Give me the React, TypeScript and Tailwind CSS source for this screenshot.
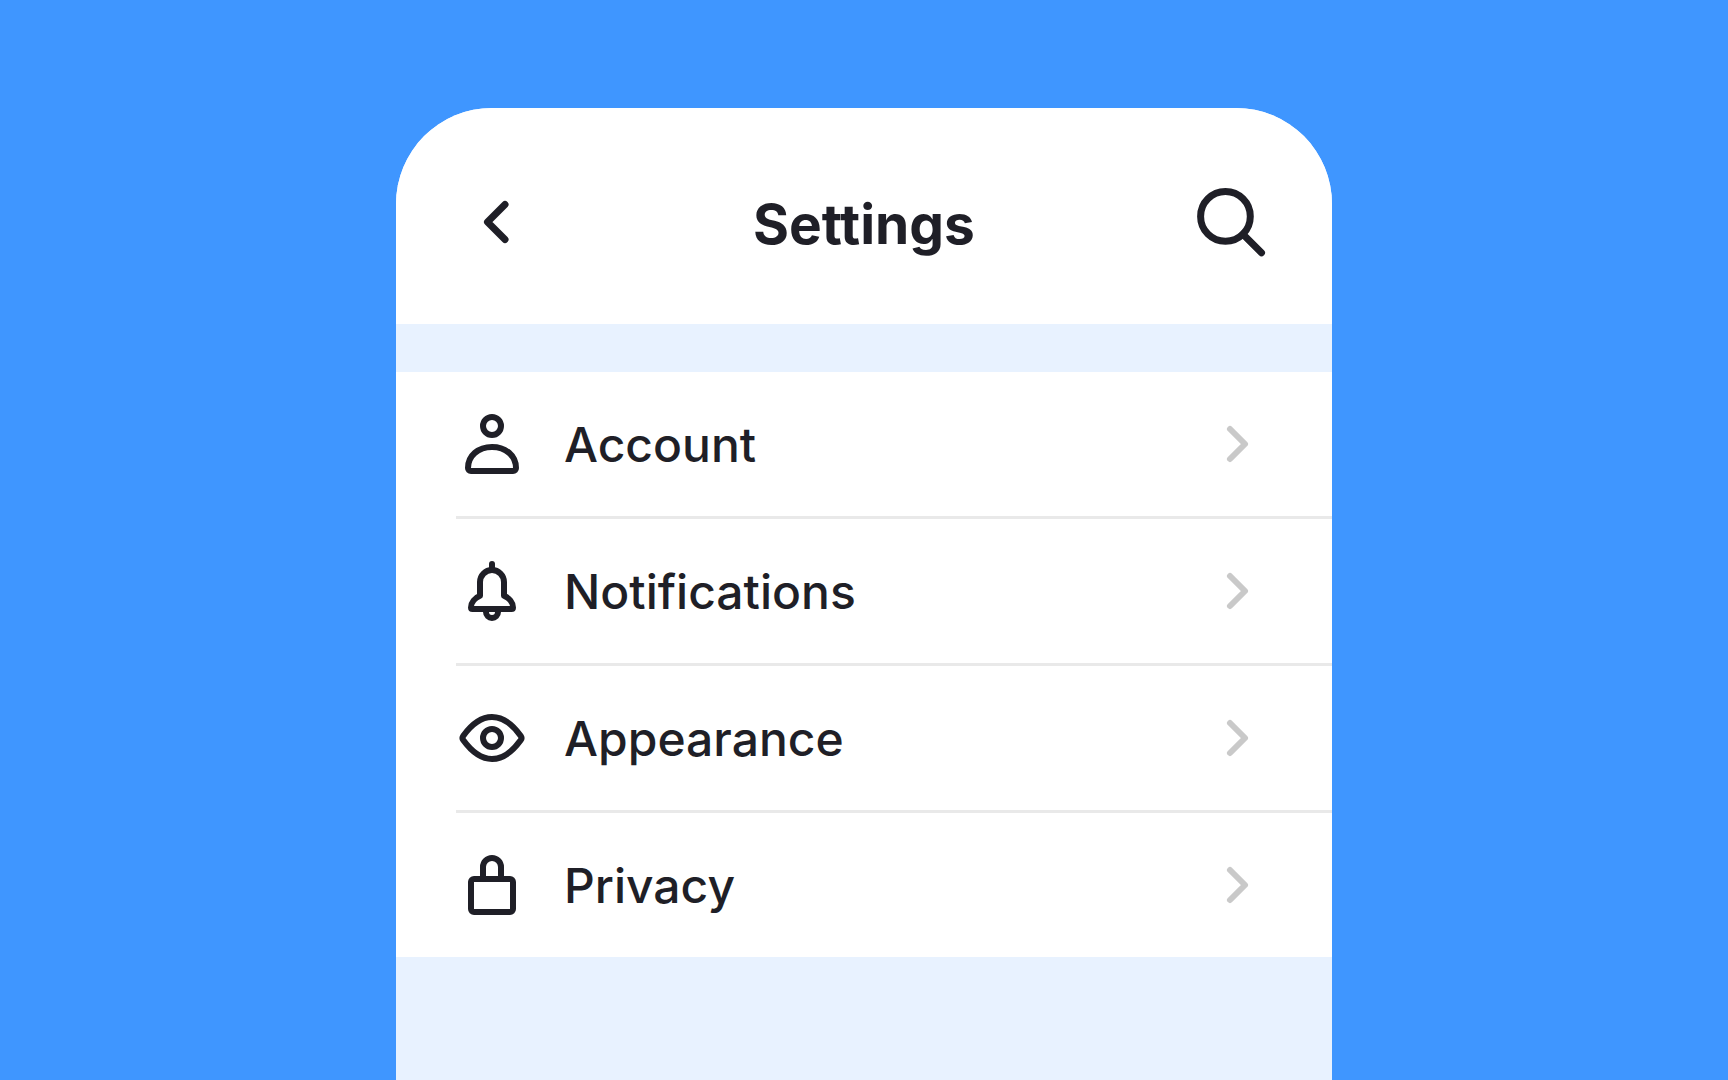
import type { ReactNode } from 'react'

interface IconProps {
    className?: string;
    children: ReactNode;
}

interface SettingsItem {
    label: string;
    href: string;
    icon: ReactNode;
}

function Icon({ className = 'size-18', children }: IconProps) {
    return (
        <svg
            className={`shrink-0 ${className}`}
            viewBox="0 0 24 24"
            fill="none"
            stroke="currentColor"
            strokeWidth="2"
            strokeLinecap="round"
            strokeLinejoin="round"
            aria-hidden="true"
        >
            {children}
        </svg>
    )
}

const items: SettingsItem[] = [
    {
        label: 'Account',
        href: '#account',
        icon: (
            <Icon>
                <circle cx="12" cy="6" r="3" />
                <path d="M12 13c-4.6 0-8 2.900-8 7 0 .6.400 1 1 1h14c.6 0 1-.4 1-1 0-4.100-3.400-7-8-7Z" />
            </Icon>
        )
    },
    {
        label: 'Notifications',
        href: '#notifications',
        icon: (
            <Icon>
                <path d="M12 3v2" />
                <path d="M12 5a4 4 0 0 0-4 4v4.600c-1.700.7-3 2.200-3 3.900 0 .3.200.5.500.5h13c.3 0 .5-.2.500-.5 0-1.700-1.300-3.200-3-3.900V9a4 4 0 0 0-4-4Z" />
                <path d="M10 19a2 2 0 0 0 4 0" />
            </Icon>
        )
    },
    {
        label: 'Appearance',
        href: '#appearance',
        icon: (
            <Icon>
                <path d="M2.400 12.700a1.200 1.200 0 0 1 0-1.400C5 7.700 8.300 5 12 5s7 2.700 9.600 6.300a1.200 1.200 0 0 1 0 1.400C19 16.300 15.700 19 12 19s-7-2.700-9.600-6.300Z" />
                <circle cx="12" cy="12" r="3" />
            </Icon>
        )
    },
    {
        label: 'Privacy',
        href: '#privacy',
        icon: (
            <Icon>
                <rect x="5" y="10" width="14" height="11" rx="1" />
                <path d="M9 10V6a3 3 0 0 1 6 0v4" />
            </Icon>
        )
    }
]

function Header() {
    return (
        <header className="flex items-center justify-between bg-white px-15 pt-18 pb-15">
            <button type="button" aria-label="Back">
                <Icon className="size-21">
                    <path d="m14 7-5 5 5 5" />
                </Icon>
            </button>
            <h1 className="pt-1 text-[55px] leading-[66px] font-bold">Settings</h1>
            <button type="button" aria-label="Search">
                <Icon className="size-21">
                    <circle cx="10.7" cy="10.4" r="7.1" />
                    <path d="m15.7 15.5 5.3 5.3" />
                </Icon>
            </button>
        </header>
    )
}

function SettingsRow({ label, href, icon }: SettingsItem) {
    return (
        <li className="ml-15 border-b-3 border-[#e9e9e9] last:border-b-0">
            <a href={href} className="flex items-center gap-9 py-9 pr-15">
                {icon}
                <span className="flex-1 pt-0.5 text-5xl leading-[60px] font-medium">{label}</span>
                <Icon className="size-18 text-[#c9c9c9]">
                    <path d="m10 7 5 5-5 5" />
                </Icon>
            </a>
        </li>
    )
}

export default function App() {
    return (
        <div className="flex min-h-screen justify-center bg-[#3f96ff] pt-27 font-['Inter',sans-serif] text-[#1f1f27]">
            <main className="w-full max-w-[936px] overflow-hidden rounded-t-[96px] bg-[#e8f2ff]">
                <Header />
                <ul className="mt-12 bg-white">
                    {items.map((item) => (
                        <SettingsRow key={item.label} {...item} />
                    ))}
                </ul>
            </main>
        </div>
    )
}
